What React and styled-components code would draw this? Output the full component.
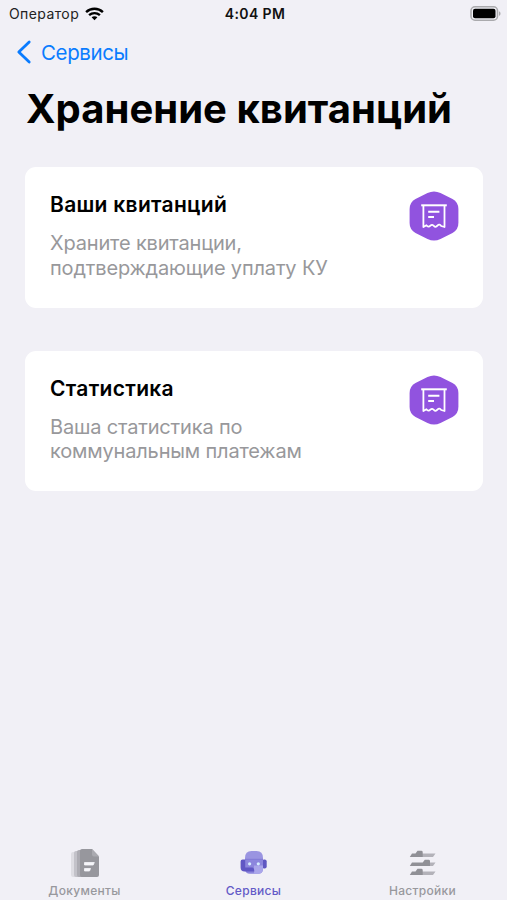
import React from 'react';
import styled, { createGlobalStyle } from 'styled-components';

const GlobalStyle = createGlobalStyle`
    * {
        box-sizing: border-box;
    }
    body {
        margin: 0;
        background: #f1f0f6;
        font-family: Inter, "Liberation Sans", sans-serif;
    }
`;

const Screen = styled.div`
    width: 100%;
    height: 900px;
    display: flex;
    flex-direction: column;
    background: #f1f0f6;
    color: #000000;
    overflow: hidden;
`;

const StatusBar = styled.header`
    height: 27px;
    padding: 0 6px 0 9px;
    display: grid;
    grid-template-columns: 1fr auto 1fr;
    align-items: center;
    font-size: 14px;
    line-height: 27px;
`;

const Carrier = styled.div`
    display: flex;
    align-items: center;
    gap: 6px;
    color: #222222;
    letter-spacing: 0.4px;
`;

const Clock = styled.div`
    font-weight: 600;
    letter-spacing: 0.4px;
    color: #111111;
`;

const BatteryBox = styled.div`
    display: flex;
    justify-content: flex-end;
`;

const NavBar = styled.nav`
    height: 50px;
    padding: 0 0 0 16px;
    display: flex;
    align-items: center;
`;

const BackButton = styled.button`
    display: flex;
    align-items: center;
    gap: 9px;
    padding: 0;
    border: none;
    background: none;
    color: #0a7cff;
    font-family: inherit;
    font-size: 20.5px;
    line-height: 26px;
    letter-spacing: -0.4px;
    cursor: pointer;

    span {
        padding-top: 1px;
    }
`;

const Title = styled.h1`
    margin: 7px 0 33px 26px;
    font-size: 40px;
    line-height: 50px;
    font-weight: 700;
    letter-spacing: 0.03px;
    white-space: nowrap;
`;

const CardList = styled.main`
    flex: 1;
    padding: 0 24px 0 25px;
    display: flex;
    flex-direction: column;
    gap: 43px;
`;

const Card = styled.section`
    height: 140.5px;
    padding: 24px 24.5px 24px 25px;
    display: flex;
    justify-content: space-between;
    align-items: flex-start;
    background: #ffffff;
    border-radius: 11px;
`;

const CardTitle = styled.h2`
    margin: 0 0 13px;
    font-size: 21px;
    line-height: 27px;
    font-weight: 600;
    letter-spacing: 0.3px;
`;

const CardText = styled.p`
    margin: 0;
    font-size: 20px;
    line-height: 24.5px;
    letter-spacing: -0.17px;
    color: #98989b;
    white-space: pre-line;
`;

const TabBar = styled.footer`
    height: 60px;
    display: flex;
`;

const Tab = styled.div`
    flex: 1;
    display: flex;
    flex-direction: column;
    align-items: center;
    padding-top: 8px;
    color: ${(props) => (props.$active ? '#635ac7' : '#98989d')};
    font-size: 12px;
    line-height: 16px;
    font-weight: 500;
    letter-spacing: 0.3px;

    svg {
        margin-bottom: 5px;
    }
`;

const WifiIcon = () => (
    <svg width="19" height="14" viewBox="0 0 19 14" fill="none" stroke="#000000" strokeWidth="2.4">
        <path d="M1.1 5.1C5.8 0.6 13.2 0.6 17.9 5.1" />
        <path d="M4.1 8.2C7.2 5.4 11.8 5.4 14.9 8.2" />
        <path d="M9.5 13.2L6.6 10.3C8.2 8.8 10.8 8.8 12.4 10.3Z" fill="#000000" stroke="none" />
    </svg>
);

const BatteryIcon = () => (
    <svg width="31" height="15" viewBox="0 0 31 15">
        <rect x="1" y="0.8" width="26.5" height="13.4" rx="4" fill="#f1f0f6" stroke="#aaaaad" strokeWidth="1.6" />
        <rect x="3" y="2.8" width="22.5" height="9.4" rx="2" fill="#000000" />
        <path d="M29 5.2C31 6 31 9 29 9.8Z" fill="#aaaaad" />
    </svg>
);

const BackIcon = () => (
    <svg width="16" height="24" viewBox="0 0 16 24" fill="none" stroke="#0a7cff" strokeWidth="2.8" strokeLinecap="round" strokeLinejoin="round">
        <path d="M13.2 2L2.8 12L13.2 22" />
    </svg>
);

const ReceiptIcon = () => (
    <svg width="50" height="50" viewBox="0 0 50 50" fill="none">
        <path
            d="M18.5 2Q25 -1 31.5 2L43.5 8Q49.4 11.3 49.4 18V32Q49.4 38.7 43.5 42L31.5 48Q25 51 18.5 48L6.5 42Q0.6 38.7 0.6 32V18Q0.6 11.3 6.5 8Z"
            fill="#9153df"
        />
        <g stroke="#ffffff" strokeWidth="1.8" strokeLinejoin="round">
            <path d="M12.2 14.3H37.8" strokeWidth="2" />
            <path d="M14.4 14.3V36L17.4 34.2Q19.4 36.8 21.4 34.6Q23.2 32.9 24.9 34.9Q26.6 36.8 28.4 34.6Q30.4 32.6 32.2 35L35.5 36V14.3" />
            <path d="M19.2 20.7H30.4M19.2 26.1H25" strokeWidth="2" />
        </g>
    </svg>
);

const DocumentsIcon = () => (
    <svg width="30" height="30" viewBox="0 0 30 30">
        <path d="M1 6Q1 4 3 4H9V29H3Q1 29 1 27Z" fill="#dedde3" />
        <path d="M4 5Q4 3 6 3H13V29H6Q4 29 4 27Z" fill="#c3c2c9" />
        <path d="M7 4Q7 2 9 2H17V29H9Q7 29 7 27Z" fill="#adacb3" />
        <path d="M10 3Q10 1 12 1H22L29 8.5V27Q29 29 27 29H12Q10 29 10 27Z" fill="#97979d" />
        <path d="M22 1L29 8.5H24Q22 8.5 22 6.5Z" fill="#aaaab0" />
        <path d="M14.5 14.5H24.3L23.2 17H14.5ZM14.5 20.5H20.5L19.5 23H14.5Z" fill="#f6f6fa" stroke="#f6f6fa" strokeWidth="0.8" />
    </svg>
);

const ServicesIcon = () => (
    <svg width="30" height="30" viewBox="0 0 30 30">
        <rect x="23" y="11.5" width="4.7" height="9" rx="2" fill="#6058c2" />
        <path d="M6 10H24V21Q24 25.8 19 25.8H11Q6 25.8 6 21Z" fill="#8c86dd" />
        <path d="M15 17.5H24V21Q24 25.8 19 25.8H15Z" fill="#aaa6ea" />
        <path d="M6 10Q6 3 12.5 3H17.5Q24 3 24 10V11.3H6Z" fill="#9a94e1" />
        <path d="M6.2 11.3H24" stroke="#7f78d5" strokeWidth="0.9" />
        <path d="M1.6 13.5Q1.6 11.5 3.6 11.5H6.2V19.4H13.5Q15.3 19.8 15.3 23.6H5.6Q1.6 23.3 1.6 19.5Z" fill="#6057c4" />
        <circle cx="10.6" cy="15.8" r="1.6" fill="#d6edff" />
        <circle cx="19.3" cy="15.8" r="1.6" fill="#d6edff" />
    </svg>
);

const SettingsIcon = () => (
    <svg width="30" height="30" viewBox="0 0 30 30">
        <g fill="#b3b2b9">
            <path d="M14 5.4H27.5L25 9H14Z" />
            <path d="M21 14.4H27.5L25 18H21Z" />
            <path d="M14 23.4H27.5L25 27H14Z" />
        </g>
        <g fill="#909096">
            <path d="M1.8 9L4 5.4H7.5L9.5 2.8H13.3Q14.7 2.8 14.7 4.2V9Z" />
            <path d="M1.8 18L4 14.4H14.7L16.8 11.8H20.6Q22 11.8 22 13.2V18Z" />
            <path d="M1.8 27L4 23.4H7.5L9.5 20.8H13.3Q14.7 20.8 14.7 22.2V27Z" />
        </g>
    </svg>
);

const cards = [
    { title: 'Ваши квитанций', text: 'Храните квитанции,\nподтверждающие уплату КУ' },
    { title: 'Статистика', text: 'Ваша статистика по\nкоммунальным платежам' },
];

const App = () => {
    return (
        <>
            <GlobalStyle />
            <Screen>
                <StatusBar>
                    <Carrier>
                        <span>Оператор</span>
                        <WifiIcon />
                    </Carrier>
                    <Clock>4:04 PM</Clock>
                    <BatteryBox>
                        <BatteryIcon />
                    </BatteryBox>
                </StatusBar>
                <NavBar>
                    <BackButton>
                        <BackIcon />
                        <span>Сервисы</span>
                    </BackButton>
                </NavBar>
                <Title>Хранение квитанций</Title>
                <CardList>
                    {cards.map((card) => (
                        <Card key={card.title}>
                            <div>
                                <CardTitle>{card.title}</CardTitle>
                                <CardText>{card.text}</CardText>
                            </div>
                            <ReceiptIcon />
                        </Card>
                    ))}
                </CardList>
                <TabBar>
                    <Tab>
                        <DocumentsIcon />
                        Документы
                    </Tab>
                    <Tab $active>
                        <ServicesIcon />
                        Сервисы
                    </Tab>
                    <Tab>
                        <SettingsIcon />
                        Настройки
                    </Tab>
                </TabBar>
            </Screen>
        </>
    );
};

export default App;
